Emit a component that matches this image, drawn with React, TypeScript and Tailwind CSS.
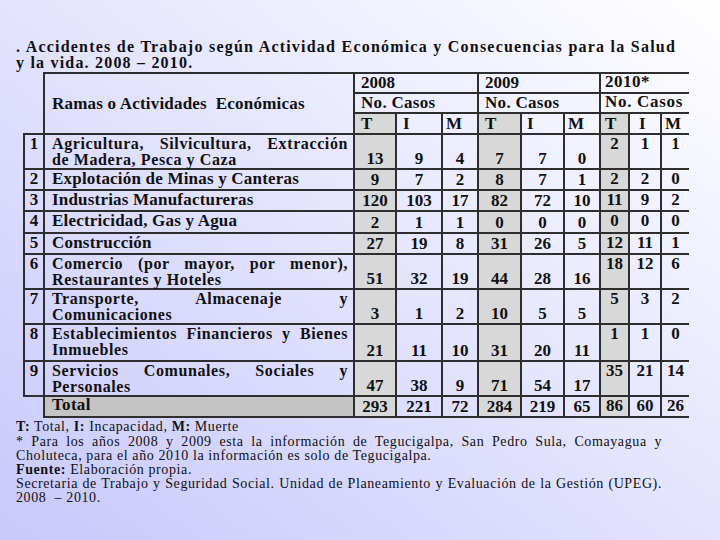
import React from 'react';

type Row = {
  n: string;
  lines: string[];
  h: string;
  v: string[];
};

const rows: Row[] = [
  { n: '1', lines: ['Agricultura,  Silvicultura,  Extracción', 'de Madera, Pesca y Caza'], h: 'h-[34px]', v: ['13', '9', '4', '7', '7', '0', '2', '1', '1'] },
  { n: '2', lines: ['Explotación  de Minas y Canteras'], h: 'h-[21px]', v: ['9', '7', '2', '8', '7', '1', '2', '2', '0'] },
  { n: '3', lines: ['Industrias  Manufactureras'], h: 'h-[21px]', v: ['120', '103', '17', '82', '72', '10', '11', '9', '2'] },
  { n: '4', lines: ['Electricidad,  Gas y Agua'], h: 'h-[22px]', v: ['2', '1', '1', '0', '0', '0', '0', '0', '0'] },
  { n: '5', lines: ['Construcción'], h: 'h-[21px]', v: ['27', '19', '8', '31', '26', '5', '12', '11', '1'] },
  { n: '6', lines: ['Comercio  (por  mayor,  por  menor),', 'Restaurantes y Hoteles'], h: 'h-[35px]', v: ['51', '32', '19', '44', '28', '16', '18', '12', '6'] },
  { n: '7', lines: ['Transporte,  Almacenaje  y', 'Comunicaciones'], h: 'h-[35px]', v: ['3', '1', '2', '10', '5', '5', '5', '3', '2'] },
  { n: '8', lines: ['Establecimientos Financieros y Bienes', 'Inmuebles'], h: 'h-[37px]', v: ['21', '11', '10', '31', '20', '11', '1', '1', '0'] },
  { n: '9', lines: ['Servicios  Comunales,  Sociales  y', 'Personales'], h: 'h-[35px]', v: ['47', '38', '9', '71', '54', '17', '35', '21', '14'] },
];

const totals = ['293', '221', '72', '284', '219', '65', '86', '60', '26'];

// left padding of the T / I / M header letters
const letterPad = ['pl-[6px]', 'pl-[6px]', 'pl-[3px]', 'pl-[6px]', 'pl-[5px]', 'pl-[3px]', 'pl-[4px]', 'pl-[9px]', 'pl-[3px]'];

const cell = 'border-2 border-[#2e2e2e] p-0';
const shaded = (i: number) => (i === 0 || i === 3 || i === 6 ? 'bg-[#d8d8d8]' : '');

const ValueCells: React.FC<{ v: string[] }> = ({ v }) => (
  <>
    {v.map((x, i) => (
      <td
        key={i}
        className={`${cell} ${shaded(i)} ${i === 8 ? 'border-r-0' : ''} ${
          i >= 6 ? 'align-top pt-[1px]' : 'align-bottom pb-[1px]'
        } text-center text-[17px]`}
      >
        {x}
      </td>
    ))}
  </>
);

const App: React.FC = () => {
  return (
    <div className="w-[720px] h-[540px] overflow-hidden bg-linear-to-bl from-white to-[#c8c8fb] font-[Liberation_Serif,Times_New_Roman,serif] text-[#111]">
      <div className="pt-[39px] pl-[16px] w-[676px]">
        {/* Title */}
        <div className="text-[16px] leading-[16px] font-bold tracking-[1.2px]">
          <div className="text-justify [text-align-last:justify]">
            . Accidentes de Trabajo según Actividad Económica y Consecuencias para la Salud
          </div>
          <div>y la vida. 2008 – 2010.</div>
        </div>
      </div>

      {/* Table */}
      <table className="ml-[23px] mt-[1px] w-[665px] table-fixed border-collapse">
        <colgroup>
          <col className="w-[20px]" />
          <col className="w-[310px]" />
          <col className="w-[42px]" />
          <col className="w-[46px]" />
          <col className="w-[36px]" />
          <col className="w-[43px]" />
          <col className="w-[43px]" />
          <col className="w-[36px]" />
          <col className="w-[29px]" />
          <col className="w-[32px]" />
          <col className="w-[28px]" />
        </colgroup>
        <tbody className="font-bold text-[16px] leading-[16px]">
          <tr className="h-[20px]">
            <td rowSpan={3} className="p-0" />
            <td rowSpan={3} className={`${cell} px-[7px] text-[17px] tracking-[0.2px] align-middle`}>
              Ramas o Actividades&nbsp; Económicas
            </td>
            <td colSpan={3} className={`${cell} pl-[6px] align-top pt-[1px] text-[17px]`}>2008</td>
            <td colSpan={3} className={`${cell} pl-[6px] align-top pt-[1px] text-[17px]`}>2009</td>
            <td colSpan={3} className={`${cell} border-r-0 pl-[4px] align-top text-[17px] tracking-[0.5px]`}>2010*</td>
          </tr>
          <tr className="h-[20px]">
            <td colSpan={3} className={`${cell} pl-[6px] text-[17px] tracking-[0.3px]`}>No. Casos</td>
            <td colSpan={3} className={`${cell} pl-[6px] text-[17px] tracking-[0.3px]`}>No. Casos</td>
            <td colSpan={3} className={`${cell} border-r-0 pl-[4px] text-[17px] tracking-[0.7px] align-top`}>No. Casos</td>
          </tr>
          <tr className="h-[21px]">
            {['T', 'I', 'M', 'T', 'I', 'M', 'T', 'I', 'M'].map((x, i) => (
              <td
                key={i}
                className={`${cell} ${shaded(i)} ${i === 8 ? 'border-r-0' : ''} ${letterPad[i]} text-[17px] align-middle`}
              >
                {x}
              </td>
            ))}
          </tr>
          {rows.map((r) => (
            <tr key={r.n} className={r.h}>
              <td className={`${cell} text-center align-top pt-[1px] text-[17px]`}>{r.n}</td>
              <td className={`${cell} pl-[7px] pr-[5px] align-top pt-[1px] tracking-[0.6px]`}>
                {r.lines.length > 1 ? (
                  <>
                    <div className="text-justify [text-align-last:justify]">{r.lines[0]}</div>
                    <div>{r.lines[1]}</div>
                  </>
                ) : (
                  <div className="text-[17px] tracking-[0.2px]">{r.lines[0]}</div>
                )}
              </td>
              <ValueCells v={r.v} />
            </tr>
          ))}
          <tr className="h-[21px]">
            <td className="p-0" />
            <td className={`${cell} bg-[#c4c4c4] pl-[7px] text-[17px] tracking-[0.3px] align-top`}>Total</td>
            <ValueCells v={totals} />
          </tr>
        </tbody>
      </table>

      {/* Notes */}
      <div className="pl-[16px] pt-[2px] w-[662px] text-[14px] leading-[14px] tracking-[0.6px]">
        <div>
          <b>T:</b> Total, <b>I:</b> Incapacidad, <b>M:</b> Muerte
        </div>
        <div className="text-justify [text-align-last:justify] mt-[1px]">
          * Para los años 2008 y 2009 esta la información de Tegucigalpa, San Pedro Sula, Comayagua y
        </div>
        <div>Choluteca, para el año 2010 la información es solo de Tegucigalpa.</div>
        <div>
          <b>Fuente:</b> Elaboración propia.
        </div>
        <div className="text-justify [text-align-last:justify]">
          Secretaria de Trabajo y Seguridad Social. Unidad de Planeamiento y Evaluación de la Gestión (UPEG).
        </div>
        <div>2008&nbsp; – 2010.</div>
      </div>
    </div>
  );
};

export default App;
